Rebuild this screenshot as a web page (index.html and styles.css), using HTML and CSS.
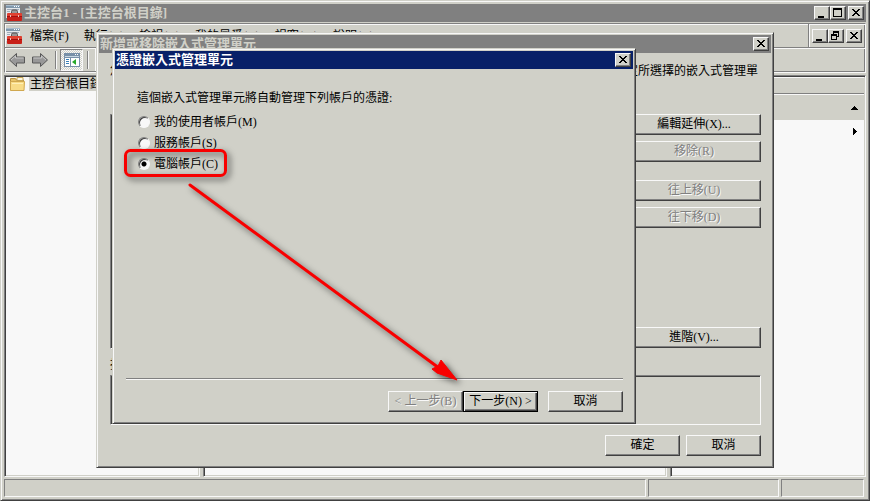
FILE: index.html
```html
<!DOCTYPE html>
<html lang="zh-Hant">
<head>
  <meta charset="UTF-8">
  <title>主控台1</title>
  <link rel="stylesheet" href="styles.css">
</head>
<body>

  <svg class="defs" aria-hidden="true">
    <symbol id="mmc" viewBox="0 0 16 16">
      <rect x="0" y="0" width="14" height="13" fill="#e4e8ec"/>
      <path d="M0 0h14v3H0z" fill="#8098ac"/>
      <path d="M0 0h14v1H0z" fill="#a8bccc"/>
      <path d="M8 1h1v1H8zM10 1h1v1h-1zM12 1h1v1h-1z" fill="#fff"/>
      <path d="M1 4h12v1H1zM1 6h3v1H1z" fill="#a0acb8"/>
      <path d="M5.500 8V6.500q0-1.500 1.500-1.500h3q1.500 0 1.500 1.500V8" fill="#989898" stroke="#585050"/>
      <path d="M2 8h13l1 1v6q0 1-1 1H2q-1 0-1-1V9z" fill="#c82018"/>
      <path d="M2 8h13l1 1v2H1V9z" fill="#e04030"/>
      <path d="M1 11h15v1H1z" fill="#a01010"/>
      <path d="M4 10h1v2H4zM12 10h1v2h-1z" fill="#f0c0b8"/>
    </symbol>
    <symbol id="min" viewBox="0 0 12 10"><path d="M2 8h6v2H2z"/></symbol>
    <symbol id="max" viewBox="0 0 12 10"><path d="M1 0h9v9H1zM2 2v6h7V2z" fill-rule="evenodd"/></symbol>
    <symbol id="restore" viewBox="0 0 12 10"><path d="M3 0h6v6H7V5h1V2H4v1H3zM1 3h6v6H1zM2 5v3h4V5z" fill-rule="evenodd"/></symbol>
    <symbol id="close" viewBox="0 0 12 10"><path d="M2 1h2v1h1v1h2V2h1V1h2v1H9v1H8v1H7v1h1v1h1v1h1v1H8V7H7V6H5v1H4v1H2V7h1V6h1V5h1V4H4V3H3V2H2z"/></symbol>
  </svg>

  <div class="window console">
    <header class="titlebar">
      <svg class="app-icon"><use href="#mmc"/></svg>
      <h1>主控台1 - [主控台根目錄]</h1>
      <button class="cap" aria-label="最小化"><svg><use href="#min"/></svg></button>
      <button class="cap" aria-label="最大化"><svg><use href="#max"/></svg></button>
      <button class="cap cap-close" aria-label="關閉"><svg><use href="#close"/></svg></button>
    </header>

    <div class="rebar">
      <div class="menu-band">
        <nav class="menu">
          <svg class="app-icon"><use href="#mmc"/></svg>
          <a href="#">檔案(F)</a>
          <a href="#">執行(A)</a>
          <a href="#">檢視(V)</a>
          <a href="#">我的最愛(O)</a>
          <a href="#">視窗(W)</a>
          <a href="#">說明(H)</a>
        </nav>
        <div class="child-caps">
          <button class="cap" aria-label="最小化子視窗"><svg><use href="#min"/></svg></button>
          <button class="cap" aria-label="還原子視窗"><svg><use href="#restore"/></svg></button>
          <button class="cap cap-close" aria-label="關閉子視窗"><svg><use href="#close"/></svg></button>
        </div>
      </div>
      <div class="toolbar">
        <button class="tool" aria-label="上一頁">
          <svg viewBox="0 0 16 14"><path d="M.5 7 7.500.5v3.500h8v6h-8v3.500z" fill="#989898" stroke="#585858"/><path d="M2 7 6.500 3v2h8" fill="none" stroke="#c8c8c8"/></svg>
        </button>
        <button class="tool" aria-label="下一頁">
          <svg viewBox="0 0 16 14"><path d="M15.500 7 8.500.5v3.500h-8v6h8v3.500z" fill="#989898" stroke="#585858"/><path d="M1.500 5h8V3l4.500 4" fill="none" stroke="#c8c8c8"/></svg>
        </button>
        <span class="tool-sep"></span>
        <button class="tool tool-on" aria-label="顯示/隱藏主控台樹狀目錄">
          <svg viewBox="0 0 16 14"><path d="M0 0h16v14H0z" fill="#7890a8"/><path d="M1 3h14v1H1z" fill="#c8d8e4"/><path d="M1 5h5v8H1zM7 5h8v8H7z" fill="#fff"/><path d="M2 6h3v1H2zM2 8h3v1H2zM2 10h3v1H2z" fill="#3880b8"/><path d="M12 6v6L8 9z" fill="#28a828"/><path d="M11 1h1v1h-1zM13 1h1v1h-1z" fill="#fff"/></svg>
        </button>
        <span class="tool-sep"></span>
        <button class="tool tool-up" aria-label="匯出清單"></button>
      </div>
    </div>

    <main class="panes">
      <section class="pane tree">
        <div class="tree-row">
          <svg class="folder" viewBox="0 0 15 14"><path d="M.5 1.500h5l1 1.500h7v10H.5z" fill="#e8c468" stroke="#b89040"/><path d="M7 .5h6v3H7z" fill="#fff8e0" stroke="#c8a858"/><path d="M.5 4.500h14l-.5 9H.5z" fill="#f8dc88" stroke="#d0a850"/><path d="M2 6h11v1H2z" fill="#fff0b8"/></svg>
          <span>主控台根目錄</span>
        </div>
      </section>
      <section class="pane list"></section>
      <section class="pane actions">
        <div class="actions-head"></div>
        <button class="actions-group" aria-label="摺疊"><svg viewBox="0 0 7 4"><path d="M3 0h1v1h1v1h1v1h1v1H0V3h1V2h1V1h1z"/></svg></button>
        <button class="actions-item" aria-label="其他動作"><svg viewBox="0 0 4 7"><path d="M0 0h1v1h1v1h1v1h1v1H3v1H2v1H1v1H0z"/></svg></button>
      </section>
    </main>

    <footer class="status">
      <span></span><span></span><span></span>
    </footer>
  </div>

  <div class="window dialog snapins" role="dialog" aria-labelledby="snapins-title">
    <header class="titlebar">
      <h2 id="snapins-title">新增或移除嵌入式管理單元</h2>
      <button class="cap cap-close" aria-label="關閉"><svg><use href="#close"/></svg></button>
    </header>
    <div class="snapins-body">
      <p class="intro">您可以從電腦上可用的嵌入式管理單元中，選取要用於這個主控台的嵌入式管理單元，並且可以設定所選擇的嵌入式管理單</p>
      <div class="snapins-lists">
        <div class="sunken"></div>
        <div class="side-buttons">
          <button class="btn">編輯延伸(X)...</button>
          <button class="btn" disabled>移除(R)</button>
          <button class="btn btn-group" disabled>往上移(U)</button>
          <button class="btn" disabled>往下移(D)</button>
          <button class="btn btn-last">進階(V)...</button>
        </div>
      </div>
      <h3>描述:</h3>
      <div class="sunken description"></div>
      <div class="buttons">
        <button class="btn">確定</button>
        <button class="btn">取消</button>
      </div>
    </div>
  </div>

  <div class="window dialog wizard" role="dialog" aria-labelledby="wizard-title">
    <header class="titlebar active">
      <h2 id="wizard-title">憑證嵌入式管理單元</h2>
      <button class="cap cap-close" aria-label="關閉"><svg><use href="#close"/></svg></button>
    </header>
    <form class="wizard-body">
      <fieldset>
        <legend>這個嵌入式管理單元將自動管理下列帳戶的憑證:</legend>
        <label><input type="radio" name="account">我的使用者帳戶(M)</label>
        <label><input type="radio" name="account">服務帳戶(S)</label>
        <label><input type="radio" name="account" checked>電腦帳戶(C)</label>
      </fieldset>
      <div class="wizard-buttons">
        <button type="button" class="btn" disabled>&lt; 上一步(B)</button>
        <button type="button" class="btn btn-default">下一步(N) &gt;</button>
        <button type="button" class="btn btn-cancel">取消</button>
      </div>
    </form>
  </div>

  <svg class="marks" viewBox="0 0 350 245" aria-hidden="true">
    <rect x="5.500" y="5.500" width="100" height="25" rx="5"/>
    <path class="shaft" d="M70 40 319 223"/>
    <path class="head" d="M337 235 321 215 318 221 312 224 317 228z"/>
  </svg>

</body>
</html>
```
FILE: styles.css
```css
:root {
  --face: #d0d0c8;
  --light: #f8f8f8;
  --shadow: #808080;
  --dark: #404040;
}

* { box-sizing: border-box; }
body { margin: 0; height: 100vh; overflow: hidden; background: var(--face); color: #000; font: 12px/14px "Liberation Serif", "Noto Sans CJK TC", serif; }
h1, h2, h3, p { margin: 0; font-size: 12px; font-weight: normal; }
button { margin: 0; padding: 0; border: 0; background: var(--face); color: inherit; font: inherit; }
a { color: inherit; text-decoration: none; }
svg { display: block; }
.defs { display: none; }

/* windows */
.window { display: flex; flex-direction: column; padding: 2px; background: var(--face); border: 1px solid; border-color: var(--face) var(--dark) var(--dark) var(--face); box-shadow: inset 1px 1px var(--light), inset -1px -1px var(--shadow); }
.console { height: 100vh; padding: 3px; }
.dialog { position: absolute; }
.snapins { left: 96px; top: 32px; width: 678px; height: 436px; }
.wizard { left: 112px; top: 48px; width: 524px; height: 376px; }

.titlebar { display: flex; flex: none; align-items: center; height: 18px; padding: 0 2px 0 1px; background: var(--shadow); color: var(--face); }
.titlebar.active { background: #082068; color: #fff; }
.titlebar h1, .titlebar h2 { flex: 1; font-size: 13px; font-weight: bold; line-height: 18px; white-space: nowrap; }
.app-icon { flex: none; width: 16px; height: 16px; }
.titlebar .app-icon { margin: 0 2px 0 1px; }

.btn, .cap { border: 1px solid; border-color: var(--light) var(--dark) var(--dark) var(--light); box-shadow: inset -1px -1px var(--shadow); }
.cap { flex: none; width: 16px; height: 14px; padding: 1px; }
.cap svg { width: 12px; height: 10px; }
.cap-close { margin-left: 2px; }
.btn { width: 75px; height: 21px; line-height: 17px; white-space: nowrap; }
.btn:disabled { color: var(--shadow); text-shadow: 1px 1px var(--light); }
.btn-default { border-color: #000; box-shadow: inset 1px 1px var(--light), inset -1px -1px var(--dark), inset -2px -2px var(--shadow); }

/* menu and toolbar */
.rebar { flex: none; margin-top: 1px; border: 1px solid; border-color: var(--shadow) var(--light) var(--light) var(--shadow); box-shadow: inset 1px 1px var(--light), inset -1px -1px var(--shadow); }
.menu-band { display: flex; height: 24px; border-bottom: 1px solid var(--shadow); }
.menu { display: flex; flex: 1; align-items: center; gap: 15px; padding-left: 1px; white-space: nowrap; }
.menu .app-icon { margin-right: -7px; }
.child-caps { display: flex; align-items: center; padding: 0 3px; border-left: 1px solid var(--shadow); box-shadow: inset 1px 1px var(--light); }
.toolbar { display: flex; align-items: center; height: 24px; box-shadow: inset 1px 1px var(--light); }
.tool { display: grid; place-items: center; width: 23px; height: 22px; background: none; }
.tool svg { width: 16px; height: 14px; }
.tool-on { border: 1px solid; border-color: var(--shadow) var(--light) var(--light) var(--shadow); background: repeating-conic-gradient(var(--light) 0 25%, var(--face) 0 50%) 0 0 / 2px 2px; }
.tool-up { margin-left: 3px; border: 1px solid var(--light); }
.tool-sep { width: 2px; height: 18px; margin: 0 3px 0 4px; border-left: 1px solid var(--shadow); border-right: 1px solid var(--light); }

/* panes */
.panes { display: grid; grid-template-columns: 196px 1fr 196px; flex: 1; gap: 3px; margin-top: 2px; }
.pane { border: 1px solid; border-color: var(--shadow) var(--light) var(--light) var(--shadow); background: var(--light); box-shadow: inset 1px 1px var(--dark), inset -1px -1px var(--face); }
.tree-row { display: flex; align-items: center; gap: 4px; padding: 1px 5px; white-space: nowrap; }
.tree-row span { padding: 0 1px; background: var(--face); }
.folder { width: 15px; height: 14px; }
.actions { display: flex; flex-direction: column; padding: 1px; }
.actions-head { height: 17px; border-top: 1px solid var(--light); border-bottom: 1px solid var(--shadow); background: var(--face); }
.actions-group, .actions-item { display: flex; align-items: center; justify-content: flex-end; height: 26px; padding-right: 6px; }
.actions-group { border-top: 1px solid var(--light); }
.actions-item { height: 23px; padding-right: 6px; margin-right: 1px; background: none; }
.actions-group svg { width: 7px; height: 4px; }
.actions-item svg { width: 4px; height: 7px; }

.status { display: grid; grid-template-columns: 1fr 131px 83px; gap: 2px; height: 18px; margin: 2px 2px 0 0; }
.status span { border: 1px solid; border-color: var(--shadow) var(--light) var(--light) var(--shadow); }

/* add/remove snap-ins */
.snapins-body { display: flex; flex: 1; flex-direction: column; padding: 11px 10px 9px 11px; }
.intro { height: 50px; white-space: nowrap; overflow: hidden; }
.snapins-lists { display: flex; height: 235px; gap: 10px; }
.snapins-lists .sunken { flex: 1; }
.side-buttons { display: flex; flex-direction: column; gap: 6px; width: 134px; }
.side-buttons .btn { width: 100%; }
.btn-group { margin-top: 12px; }
.side-buttons .btn-last { margin: auto 0 1px; }
.sunken { border: 1px solid; border-color: var(--shadow) var(--light) var(--light) var(--shadow); box-shadow: inset 1px 1px var(--dark); }
.snapins h3 { margin: 9px 0 3px; }
.description { height: 50px; }
.buttons { display: flex; justify-content: flex-end; gap: 6px; margin-top: 10px; }

/* certificates wizard */
.wizard-body { display: flex; flex: 1; flex-direction: column; justify-content: space-between; padding: 22px 10px 9px 11px; }
fieldset { margin: 0; padding: 0 11px; border: 0; }
legend { margin-bottom: 6px; padding: 0; }
label { display: flex; align-items: center; width: max-content; height: 21px; gap: 4px; }
input[type="radio"] { appearance: none; width: 12px; height: 12px; margin: 0 0 0 1px; border: 1px solid; border-color: var(--shadow) var(--light) var(--light) var(--shadow); border-radius: 50%; background: var(--light); box-shadow: inset 1px 1px var(--dark); }
input[type="radio"]:checked { background: radial-gradient(circle, #000 2px, var(--light) 3px); }
.wizard-buttons { display: flex; justify-content: flex-end; padding-top: 12px; border-top: 1px solid var(--shadow); box-shadow: inset 0 1px var(--light); }
.btn-cancel { margin-left: 10px; }

/* red marks over the wizard */
.marks { position: absolute; left: 120px; top: 145px; width: 350px; height: 245px; pointer-events: none; filter: drop-shadow(3px 3px 3px rgba(0, 0, 0, 0.6)); }
.marks rect, .shaft { fill: none; stroke: #f80000; stroke-width: 3; stroke-linecap: round; }
.head { fill: #f80000; stroke: #f80000; stroke-width: 1; }
```
